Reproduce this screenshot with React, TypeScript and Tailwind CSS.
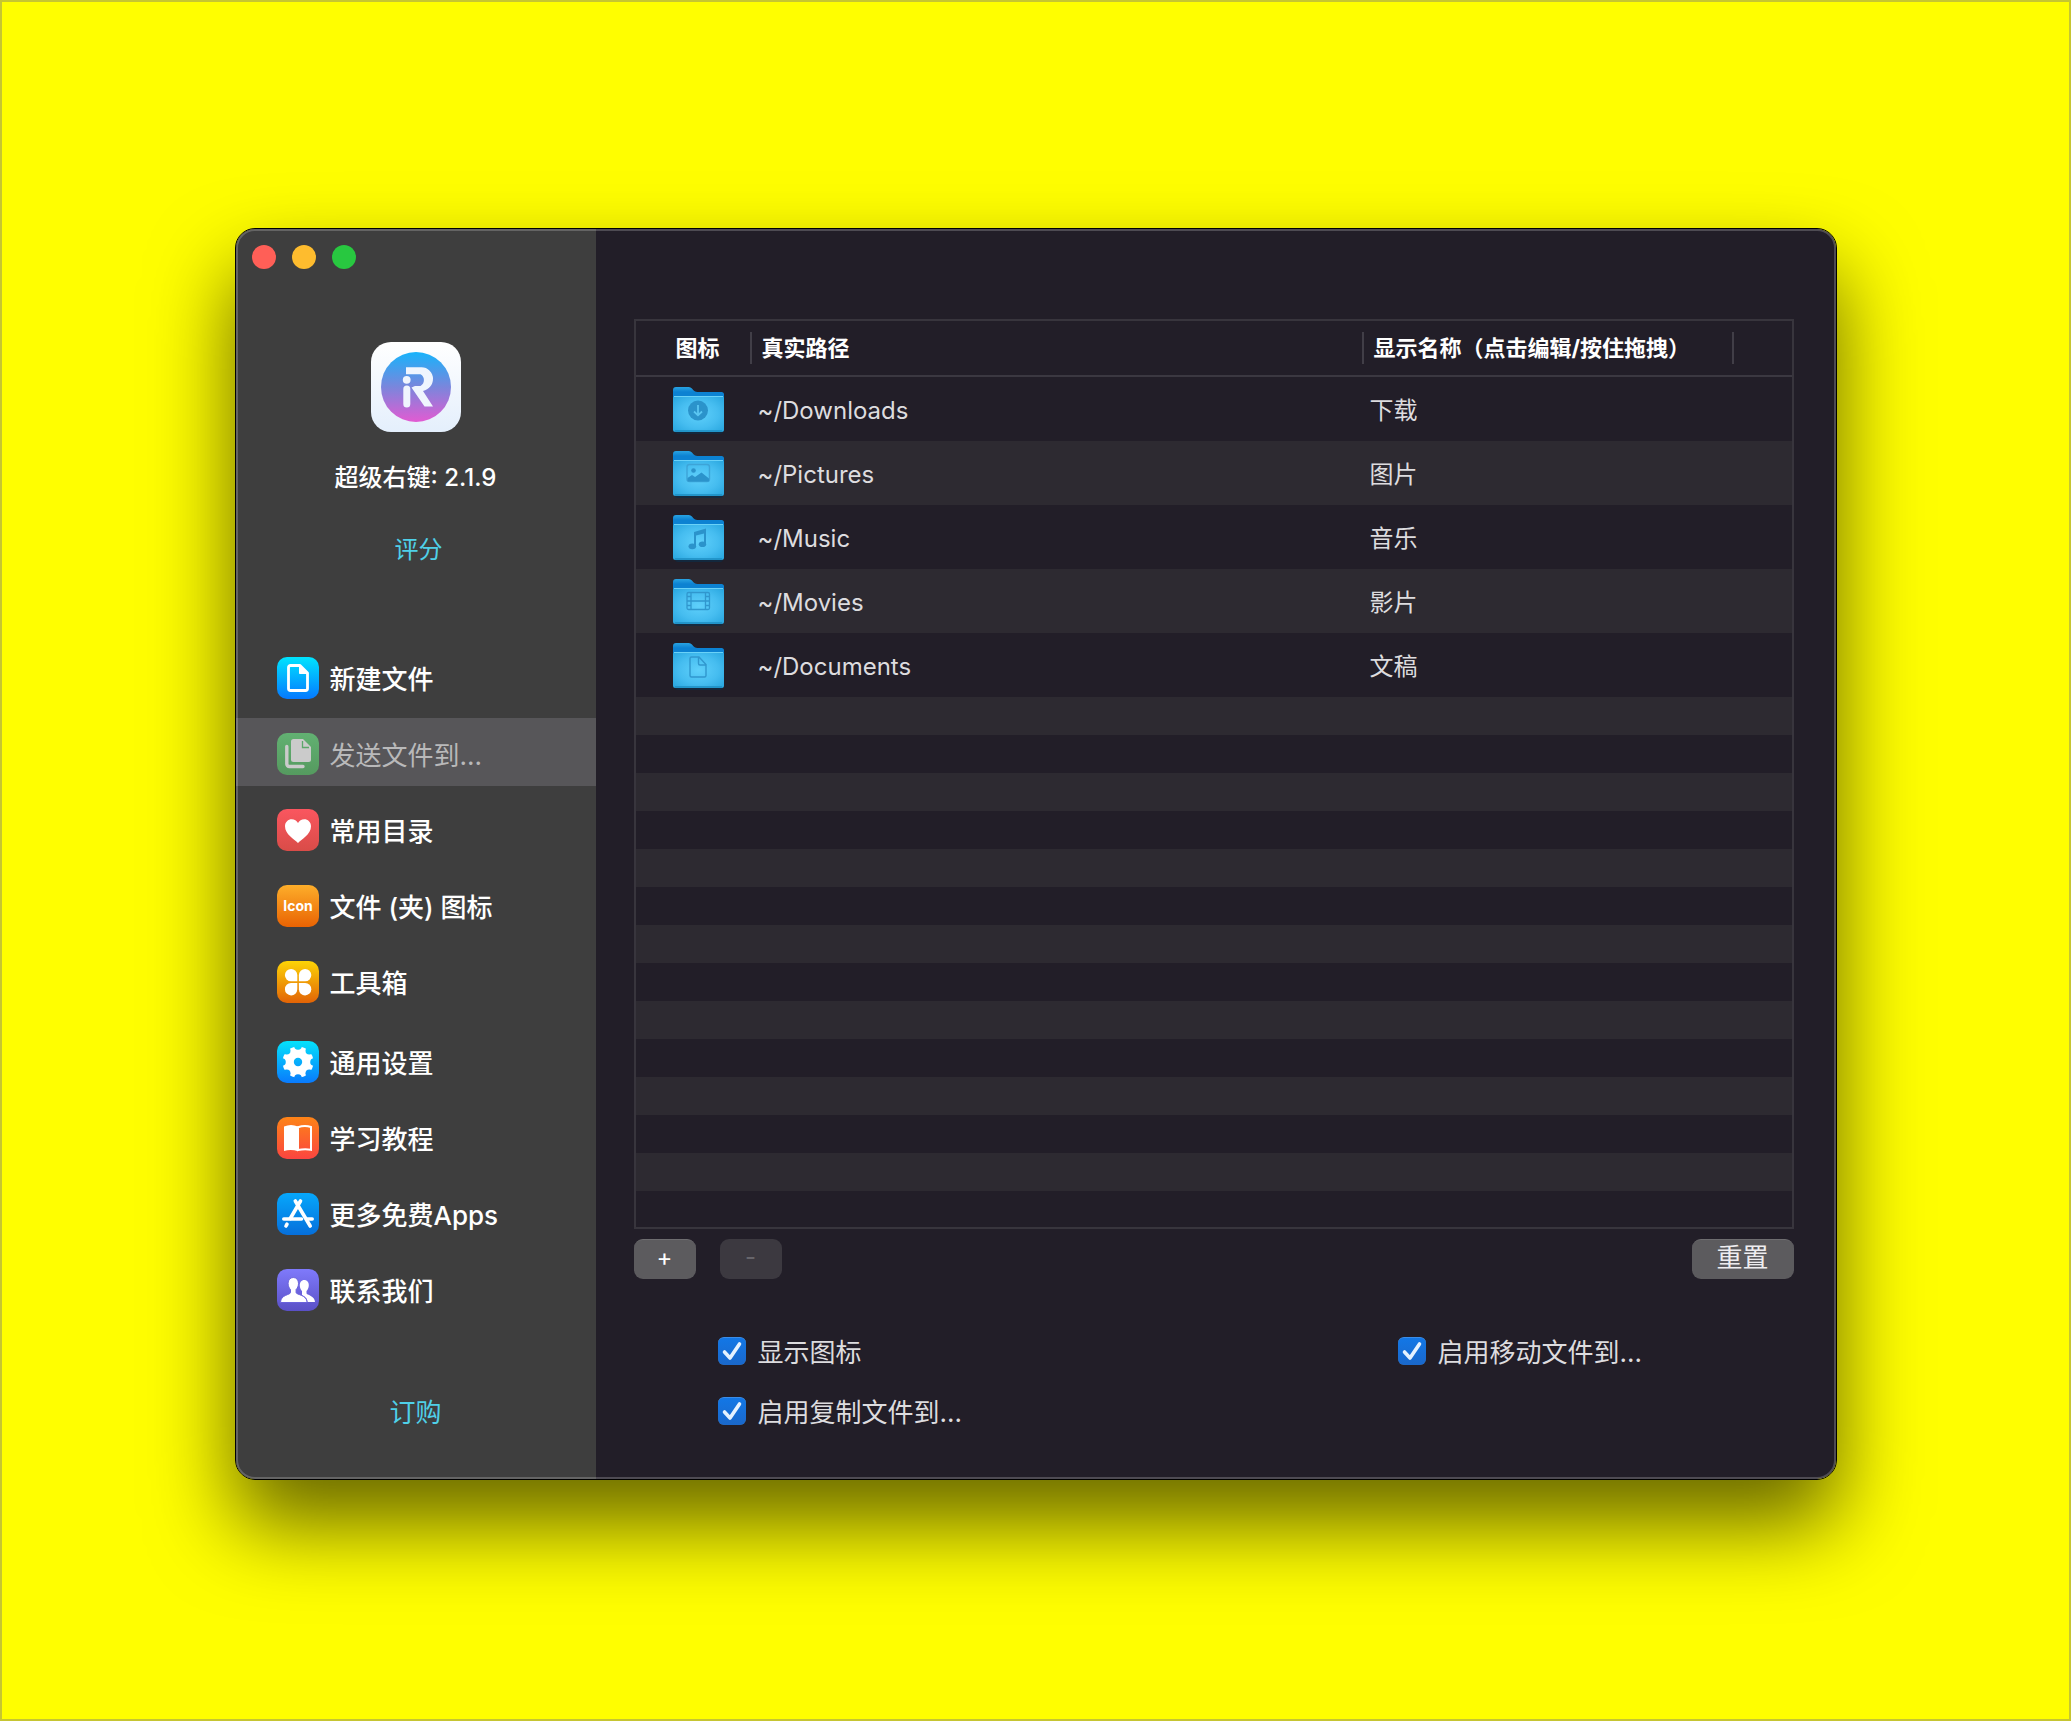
import React, { useState } from "react";
import clsx from "clsx";

interface IconTileProps {
  id: string;
  from: string;
  to: string;
  children: React.ReactNode;
}

const IconTile: React.FC<IconTileProps> = ({ id, from, to, children }) => (
  <svg viewBox="0 0 42 42" className="h-[42px] w-[42px] shrink-0" aria-hidden="true">
    <defs>
      <linearGradient id={id} x1="0" y1="0" x2="0" y2="1">
        <stop offset="0" stopColor={from} />
        <stop offset="1" stopColor={to} />
      </linearGradient>
    </defs>
    <rect width="42" height="42" rx="10" fill={`url(#${id})`} />
    {children}
  </svg>
);

const NewFileIcon = () => (
  <IconTile id="tile-new" from="#00e4fe" to="#0579ff">
    <path
      d="M13.5 8.5H23L30.500 16V31.500a2 2 0 0 1-2 2H13.500a2 2 0 0 1-2-2V10.500a2 2 0 0 1 2-2Z"
      fill="none"
      stroke="#fff"
      strokeWidth="2.800"
      strokeLinejoin="round"
    />
    <path d="M22.500 8v8.500H31Z" fill="#fff" stroke="#fff" strokeLinejoin="round" />
  </IconTile>
);

const SendFileIcon = () => (
  <IconTile id="tile-send" from="#62b172" to="#559a5f">
    <path d="M9.800 13.500V31a2.500 2.500 0 0 0 2.500 2.500H26" fill="none" stroke="#cbcbcb" strokeWidth="3.400" strokeLinecap="round" />
    <path d="M16.500 6H26l8 8v12.500a2.500 2.500 0 0 1-2.500 2.500h-15a2.500 2.500 0 0 1-2.500-2.500v-18A2.500 2.500 0 0 1 16.500 6Z" fill="#cbcbcb" />
    <path d="M25.500 8v6.500H32" fill="none" stroke="#5ca76a" strokeWidth="1.300" />
  </IconTile>
);

const HeartIcon = () => (
  <IconTile id="tile-heart" from="#fa565f" to="#d94c48">
    <path
      d="M21 34C17.500 30.500 8 25.500 8 17.300 8 13 11.200 10.300 14.700 10.300c2.700 0 5.100 1.400 6.300 3.700 1.200-2.300 3.600-3.700 6.300-3.700 3.500 0 6.700 2.700 6.700 7C34 25.500 24.500 30.500 21 34Z"
      fill="#fff"
    />
  </IconTile>
);

const TextIcon = () => (
  <IconTile id="tile-icon" from="#fdae2a" to="#e96303">
    <text x="21" y="26" textAnchor="middle" fontSize="14" fontWeight="700" fill="#fff" fontFamily="Inter, sans-serif">
      Icon
    </text>
  </IconTile>
);

const ToolboxIcon = () => (
  <IconTile id="tile-tools" from="#fdd406" to="#e26306">
    <g fill="#fff">
      <path d="M20.300 20.300h-6.300a6.200 6.200 0 1 1 6.300-6.300Z" />
      <path d="M21.900 20.300v-6.300a6.200 6.200 0 1 1 6.300 6.300Z" />
      <path d="M20.300 22v6.300a6.200 6.200 0 1 1-6.300-6.300Z" />
      <path d="M21.900 22h6.300a6.200 6.200 0 1 1-6.300 6.300Z" />
    </g>
  </IconTile>
);

const notches = [
  [21, 5],
  [32.3, 9.7],
  [37, 21],
  [32.3, 32.3],
  [21, 37],
  [9.7, 32.3],
  [5, 21],
  [9.7, 9.7],
];

const GearIcon = () => (
  <IconTile id="tile-gear" from="#04e2fb" to="#097afd">
    <mask id="gear-mask">
      <circle cx="21" cy="21" r="15.500" fill="#fff" />
      <circle cx="21" cy="21" r="4.200" fill="#000" />
      {notches.map(([x, y]) => (
        <circle key={`${x}-${y}`} cx={x} cy={y} r="3.800" fill="#000" />
      ))}
    </mask>
    <rect x="5" y="5" width="32" height="32" fill="#fff" mask="url(#gear-mask)" />
  </IconTile>
);

const BookIcon = () => (
  <IconTile id="tile-book" from="#fd8417" to="#fb4540">
    <path d="M7 9.500Q14 6.500 21 9.500V34.200Q14 32 7 34Z" fill="#fff" />
    <path d="M21 10.300Q27.500 7.800 34 10V32.700Q27.500 31.500 21 33Z" fill="none" stroke="#fff" strokeWidth="2" />
  </IconTile>
);

const AppStoreIcon = () => (
  <IconTile id="tile-store" from="#06a7fb" to="#066fdb">
    <g stroke="#fff" strokeWidth="3.600" strokeLinecap="round" fill="none">
      <path d="M23.500 8 13.300 25.500" />
      <path d="M18.300 8 33.200 33" />
      <path d="M6.800 26H24.500" />
      <path d="M30.500 26H35.200" />
      <path d="M10 31.200 9 33" />
    </g>
  </IconTile>
);

const ContactsIcon = () => (
  <IconTile id="tile-contacts" from="#7f7afb" to="#5a50c6">
    <g fill="#fff">
      <path d="M27.200 11c2.800 0 4.600 2.200 4.600 5.200 0 2.400-1 4.500-2.300 5.700v2.300c0 1.800 8.500 2.300 8.500 8.800h-7.500c-.3-3.800-2.500-5.300-5.500-7v-4c-1.300-1.200-2.200-3.200-2.200-5.700 0-3 1.700-5.300 4.400-5.300Z" />
      <path
        d="M16.300 8.500c3.200 0 5.200 2.400 5.200 5.800 0 2.700-1 5-2.400 6.200v3c0 2.500 11 2 11 10H3.500c0-8 10-7.500 10-10v-3c-1.400-1.200-2.400-3.500-2.400-6.200 0-3.400 2-5.800 5.200-5.800Z"
        stroke="#6a62dc"
        strokeWidth="1"
      />
    </g>
  </IconTile>
);

const AppLogo = () => (
  <svg viewBox="0 0 90 90" className="h-[90px] w-[90px]" role="img" aria-label="iR">
    <defs>
      <linearGradient id="logo-bg" x1="0" y1="0" x2="0" y2="1">
        <stop offset="0" stopColor="#fff" />
        <stop offset="1" stopColor="#e4effc" />
      </linearGradient>
      <linearGradient id="logo-disc" x1="0" y1="0" x2="0" y2="1">
        <stop offset="0" stopColor="#17b3fb" />
        <stop offset="0.500" stopColor="#7a86dc" />
        <stop offset="1" stopColor="#e25bd2" />
      </linearGradient>
    </defs>
    <rect width="90" height="90" rx="20" fill="url(#logo-bg)" />
    <circle cx="45" cy="45" r="35" fill="url(#logo-disc)" />
    <g fill="#eff5fe">
      <path d="M35 25.300H50.500A11.500 11.500 0 0 1 62 36.800C62 43 58 47.500 52 49L62 64.500H53.500L40.500 45.500 44 44H49.500A6.800 6.800 0 0 0 49.500 32.200H35Z" />
      <circle cx="35.700" cy="37.800" r="3.900" />
      <rect x="32.300" y="43.500" width="7" height="22" rx="3.500" />
    </g>
  </svg>
);

const FolderIcon: React.FC<{ children: React.ReactNode }> = ({ children }) => (
  <svg viewBox="0 0 52 48" className="h-[48px] w-[52px]" aria-hidden="true">
    <defs>
      <linearGradient id="folder-back" x1="0" y1="0" x2="0" y2="1">
        <stop offset="0" stopColor="#29a3e2" />
        <stop offset="0.250" stopColor="#0c82d2" />
      </linearGradient>
      <radialGradient id="folder-front" cx="0.500" cy="0.500" r="0.700">
        <stop offset="0" stopColor="#5fd0fb" />
        <stop offset="0.550" stopColor="#46bdf0" />
        <stop offset="1" stopColor="#27a5de" />
      </radialGradient>
    </defs>
    <rect x="2" y="40" width="48" height="7" rx="3" fill="#0d2c46" opacity="0.700" />
    <path d="M3 0H15.500C19.500 0 20 5 24.500 5H48.500A2.500 2.500 0 0 1 51 7.500V20H0V3A3 3 0 0 1 3 0Z" fill="url(#folder-back)" />
    <path d="M2 9H49A2 2 0 0 1 51 11V42.500A2.500 2.500 0 0 1 48.500 45H2.500A2.500 2.500 0 0 1 0 42.500V11A2 2 0 0 1 2 9Z" fill="url(#folder-front)" />
    <path d="M1 9.500H50" stroke="#6ad2f8" strokeWidth="1" />
    <path d="M2 44H49" stroke="#1d8cc0" strokeWidth="1.500" />
    {children}
  </svg>
);

const folders = [
  {
    path: "~/Downloads",
    name: "下载",
    glyph: (
      <>
        <circle cx="25" cy="23.500" r="10" fill="#2b93cb" />
        <path d="M25 18V28M21 24.500 25 28.300 29 24.500" fill="none" stroke="#5bc6f2" strokeWidth="1.800" />
      </>
    ),
  },
  {
    path: "~/Pictures",
    name: "图片",
    glyph: (
      <>
        <rect x="14" y="13.500" width="22.500" height="17" rx="2.500" fill="none" stroke="#3da4d8" strokeWidth="1.400" />
        <circle cx="20.500" cy="19.500" r="2.300" fill="#2b93cb" />
        <path d="M14.500 27 19 24 22 26 28.500 21.500 36 27.500V29.500Q36 30.500 35 30.500H15.500Q14.500 30.500 14.500 29.500Z" fill="#2b93cb" />
      </>
    ),
  },
  {
    path: "~/Music",
    name: "音乐",
    glyph: (
      <>
        <path d="M21 17 33 13.500V18L23 20.500V31H21Z" fill="#2b93cb" />
        <path d="M31 17H33V29H31Z" fill="#2b93cb" />
        <ellipse cx="19.300" cy="31.300" rx="3.800" ry="2.900" fill="#2b93cb" />
        <ellipse cx="29.500" cy="29.300" rx="3.700" ry="2.800" fill="#2b93cb" />
      </>
    ),
  },
  {
    path: "~/Movies",
    name: "影片",
    glyph: (
      <g fill="none" stroke="#3097ce" strokeWidth="1.300">
        <rect x="14" y="13.500" width="22.500" height="17" rx="1.500" />
        <path d="M18 13.500V30.500M32.500 13.500V30.500M18 22H32.500" />
        <path d="M14 17.500H18M14 22H18M14 26.500H18M32.500 17.500H36.500M32.500 22H36.500M32.500 26.500H36.500" />
      </g>
    ),
  },
  {
    path: "~/Documents",
    name: "文稿",
    glyph: (
      <path
        d="M18.500 14H26L33 21.500V32.500a1.500 1.500 0 0 1-1.500 1.500H18.500a1.500 1.500 0 0 1-1.500-1.500V15.500A1.500 1.500 0 0 1 18.500 14ZM25.500 14V20.500a1.500 1.500 0 0 0 1.500 1.500H33"
        fill="none"
        stroke="#3097ce"
        strokeWidth="1.400"
      />
    ),
  },
];

const navGroups = [
  [
    { label: "新建文件", Icon: NewFileIcon },
    { label: "发送文件到...", Icon: SendFileIcon },
    { label: "常用目录", Icon: HeartIcon },
    { label: "文件 (夹) 图标", Icon: TextIcon },
    { label: "工具箱", Icon: ToolboxIcon },
  ],
  [
    { label: "通用设置", Icon: GearIcon },
    { label: "学习教程", Icon: BookIcon },
    { label: "更多免费Apps", Icon: AppStoreIcon },
    { label: "联系我们", Icon: ContactsIcon },
  ],
];

const Sidebar = () => (
  <aside className="flex w-[360px] shrink-0 flex-col bg-[#3e3e3e]">
    <div className="flex gap-4 p-4">
      <button aria-label="关闭" className="h-6 w-6 rounded-full bg-[#ff5f57]" />
      <button aria-label="最小化" className="h-6 w-6 rounded-full bg-[#febc2e]" />
      <button aria-label="缩放" className="h-6 w-6 rounded-full bg-[#28c840]" />
    </div>
    <div className="mt-[57px] flex flex-col items-center">
      <AppLogo />
      <h1 className="mt-[30px] text-2xl font-medium text-white">超级右键: 2.1.9</h1>
      <a href="#rate" className="mt-10 pl-[6px] text-2xl text-[#4fd0e8]">
        评分
      </a>
    </div>
    <nav className="mt-[76px] flex flex-col gap-3">
      {navGroups.map((group, index) => (
        <ul key={index} className="flex flex-col gap-2">
          {group.map(({ label, Icon }) => {
            const active = label === "发送文件到...";
            return (
              <li key={label}>
                <a
                  href="#nav"
                  className={clsx(
                    "flex h-[68px] items-center gap-[11px] pt-1 pl-[41px] text-[26px] leading-8",
                    active ? "bg-[#575659] text-[#b9b9ba]" : "font-medium text-white"
                  )}
                >
                  <Icon />
                  <span className="pt-1">{label}</span>
                </a>
              </li>
            );
          })}
        </ul>
      ))}
    </nav>
    <a href="#buy" className="mt-[75px] mb-[50px] self-center text-[26px] leading-8 text-[#4fd0e8]">
      订购
    </a>
  </aside>
);

const HeaderCell: React.FC<{ className?: string; children?: React.ReactNode }> = ({ className, children }) => (
  <th className="h-14 border-b-2 border-[#3b3841] p-0 text-left text-[22px] font-bold text-white">
    <div className={clsx("flex h-8 items-center border-r-2 border-[#413e47]", className)}>{children}</div>
  </th>
);

const FolderTable = () => (
  <div className="border-2 border-[#38353d]">
    <table className="w-full table-fixed border-separate border-spacing-0">
      <colgroup>
        <col className="w-[116px]" />
        <col />
        <col className="w-[370px]" />
        <col className="w-[58px]" />
      </colgroup>
      <thead>
        <tr>
          <HeaderCell className="pl-10">图标</HeaderCell>
          <HeaderCell className="pl-[10px]">真实路径</HeaderCell>
          <HeaderCell className="pl-[10px] whitespace-nowrap">显示名称（点击编辑/按住拖拽）</HeaderCell>
          <td className="h-14 border-b-2 border-[#3b3841]" />
        </tr>
      </thead>
      <tbody className="text-2xl text-[#dddcdf]">
        {folders.map(({ path, name, glyph }) => (
          <tr key={path} className="h-16 even:bg-[#2d2a31]">
            <td className="p-0 pt-1 pl-[37px]">
              <FolderIcon>{glyph}</FolderIcon>
            </td>
            <td className="p-0 pt-1 pl-[6px]">{path}</td>
            <td className="p-0 pt-1 pl-[6px]">{name}</td>
            <td />
          </tr>
        ))}
      </tbody>
    </table>
    <div>
      {Array.from({ length: 13 }, (_, i) => (
        <div key={i} className="h-[38px] odd:bg-[#2d2a31]" />
      ))}
      <div className="h-9" />
    </div>
  </div>
);

const Option: React.FC<{ label: string }> = ({ label }) => {
  const [checked, setChecked] = useState(true);

  return (
    <label className="flex h-8 items-center gap-3 text-[26px] leading-8 text-[#dddcdf]">
      <span className="grid h-7 w-7 shrink-0">
        <input
          type="checkbox"
          checked={checked}
          onChange={(e) => setChecked(e.target.checked)}
          className="col-start-1 row-start-1 h-7 w-7 appearance-none rounded-[6px] border-t border-[#3b8de8] bg-[#555] checked:bg-linear-to-b checked:from-[#1277e6] checked:to-[#1a68cb]"
        />
        {checked && (
          <svg viewBox="0 0 28 28" className="pointer-events-none col-start-1 row-start-1 h-7 w-7">
            <path d="M6.500 15 12 21 21.500 7" fill="none" stroke="#e6f2ff" strokeWidth="3.600" strokeLinecap="round" strokeLinejoin="round" />
          </svg>
        )}
      </span>
      <span className="pt-1">{label}</span>
    </label>
  );
};

const App: React.FC = () => {
  return (
    <div className="min-h-screen border-2 border-[#c6c532] bg-[#fffe00] px-10 pt-[226px] pb-40 font-['Inter','Noto_Sans_CJK_SC',sans-serif]">
      <div className="mx-auto w-full max-w-[1602px] rounded-[20px] border border-black shadow-[0_44px_84px_rgba(0,0,0,0.6)]">
        <div className="relative flex overflow-hidden rounded-[19px] bg-[#221e28]">
          <Sidebar />
          <main className="min-w-0 flex-1 pt-[90px] pr-[42px] pb-[52px] pl-[38px]">
            <FolderTable />
            <div className="mt-[10px] flex gap-6">
              <button className="h-10 w-[62px] rounded-[9px] border-t border-[#6e6d70] bg-[#5c5b5e] pb-1 text-2xl leading-none text-white">
                +
              </button>
              <button disabled className="h-10 w-[62px] rounded-[9px] bg-[#3c3940] pb-1 text-2xl leading-none text-[#67656b]">
                -
              </button>
              <button className="ml-auto h-10 w-[102px] rounded-[9px] border-t border-[#6e6d70] bg-[#5c5b5e] pb-1 text-[26px] leading-8 text-[#eeedef]">
                重置
              </button>
            </div>
            <div className="mt-14 grid grid-cols-[680px_1fr] gap-y-7 pl-[84px]">
              <Option label="显示图标" />
              <Option label="启用移动文件到..." />
              <Option label="启用复制文件到..." />
            </div>
          </main>
          {/* inner highlight along the window edge */}
          <div className="pointer-events-none absolute inset-0 rounded-[19px] border-2 border-white/20" />
        </div>
      </div>
    </div>
  );
};

export default App;
